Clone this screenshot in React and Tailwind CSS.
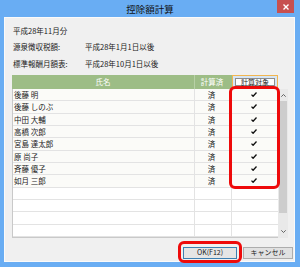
import React from 'react';

const rows = [
  { name: '後藤 明', done: true, target: true },
  { name: '後藤 しのぶ', done: true, target: true },
  { name: '中田 大輔', done: true, target: true },
  { name: '高橋 次郎', done: true, target: true },
  { name: '宮島 達太郎', done: true, target: true },
  { name: '原 尚子', done: true, target: true },
  { name: '斉藤 優子', done: true, target: true },
  { name: '如月 三郎', done: true, target: true },
  { name: '', done: false, target: false },
  { name: '', done: false, target: false },
  { name: '', done: false, target: false },
  { name: '', done: false, target: false },
];

function Check() {
  return (
    <svg width="6" height="5" viewBox="0 0 6 5">
      <path d="M0.5 2.6 L2.1 4.3 L5.5 0.5" fill="none" stroke="#111" strokeWidth="1.3" />
    </svg>
  );
}

export default function App() {
  return (
    <div className="relative w-[300px] h-[267px] bg-[#69adf3] flex flex-col text-[#1a1a1a] overflow-hidden"
      style={{ fontFamily: '"Noto Sans CJK JP", "Noto Sans", sans-serif' }}>
      {/* title bar */}
      <div className="h-[17px] flex">
        <div className="w-[23px]" />
        <div className="flex-1 flex items-center justify-center pt-[2px] text-[9.5px] text-[#111]">控除額計算</div>
        <div className="w-[17px] h-[13px] mr-[6px] bg-[#c75050] flex items-center justify-center">
          <svg width="6" height="6" viewBox="0 0 6 6">
            <path d="M0.5 0.5 L5.5 5.5 M5.5 0.5 L0.5 5.5" stroke="#fff" strokeWidth="1.4" />
          </svg>
        </div>
      </div>

      {/* client */}
      <div className="ml-[4px] mr-[5px] h-[245px] border border-[#fafafa] bg-[#f0f0f0] flex flex-col text-[7.5px]">
        <div className="pt-[7px] pl-[8px] h-[19px] flex items-center">平成28年11月分</div>
        <div className="mt-[4px] pl-[8px] h-[12px] flex items-center">
          <span className="w-[72px]">源泉徴収税額:</span>
          <span>平成28年1月1日以後</span>
        </div>
        <div className="mt-[5px] pl-[8px] h-[12px] flex items-center">
          <span className="w-[72px]">標準報酬月額表:</span>
          <span>平成28年10月1日以後</span>
        </div>

        {/* grid */}
        <div className="mt-[5px] ml-[7px] w-[276px] flex flex-col">
          <div className="h-[14px] flex">
            <div className="w-[183px] bg-[#9dbd86] text-white flex items-center justify-center border-r border-[#b8d0a6]">氏名</div>
            <div className="w-[37px] bg-[#9dbd86] text-white flex items-center justify-center pr-[3px]">計算済</div>
            <div className="w-[46px] border border-[#f2b650] bg-[#d7e6f5] flex items-center justify-center px-[2px] py-[2px]">
              <div className="w-full h-full bg-white border border-[#8e8e8e] flex items-center justify-center text-[7px] leading-none text-[#222]">計算対象</div>
            </div>
            <div className="w-[10px]" />
          </div>
          <div className="flex">
            <div className="w-[266px] border-l border-b border-[#c9c9c9] bg-white">
              {rows.map((r, i) => (
                <div key={i} className={`h-[12.33px] flex border-b border-[#e3e3e3] ${r.name ? 'bg-[#fbfbf8]' : 'bg-white'}`}>
                  <div className="w-[182px] pl-[1px] flex items-center border-r border-[#e3e3e3]">{r.name}</div>
                  <div className="w-[37px] flex items-center justify-center pr-[3px] border-r border-[#e3e3e3]">{r.done ? '済' : ''}</div>
                  <div className="w-[46px] flex items-center justify-center pr-[3px]">{r.target ? <Check /> : null}</div>
                </div>
              ))}
            </div>
            <div className="w-[10px] flex flex-col bg-[#e9e9e9]">
              <div className="h-[12px] flex items-center justify-center">
                <svg width="5" height="3" viewBox="0 0 5 3"><path d="M0.3 2.7 L2.5 0.5 L4.7 2.7" fill="none" stroke="#555" strokeWidth="0.9" /></svg>
              </div>
              <div className="h-[112px] mx-[1px] bg-[#cdcdcd]" />
              <div className="h-[12px]" />
              <div className="h-[12px] flex items-center justify-center">
                <svg width="5" height="3" viewBox="0 0 5 3"><path d="M0.3 0.3 L2.5 2.5 L4.7 0.3" fill="none" stroke="#555" strokeWidth="0.9" /></svg>
              </div>
            </div>
          </div>
        </div>

        {/* buttons */}
        <div className="mt-[9px] pr-[1px] flex justify-end gap-[6px]">
          <button className="w-[54px] h-[12px] border border-[#3c7fb1] bg-[#e5e5e5] flex items-center justify-center text-[7px] leading-none">OK(F12)</button>
          <button className="w-[50px] h-[12px] border border-[#adadad] bg-[#e1e1e1] flex items-center justify-center text-[7px] leading-none">キャンセル</button>
        </div>
      </div>
      <div className="flex-1" />

      {/* red annotation marks */}
      <div className="absolute left-[229px] top-[86px] w-[51px] h-[103px] border-[3px] border-[#ee0a0a] rounded-[6px]" />
      <div className="absolute left-[178px] top-[241px] w-[64px] h-[22px] border-[3px] border-[#ee0a0a] rounded-[6px]" />
    </div>
  );
}
